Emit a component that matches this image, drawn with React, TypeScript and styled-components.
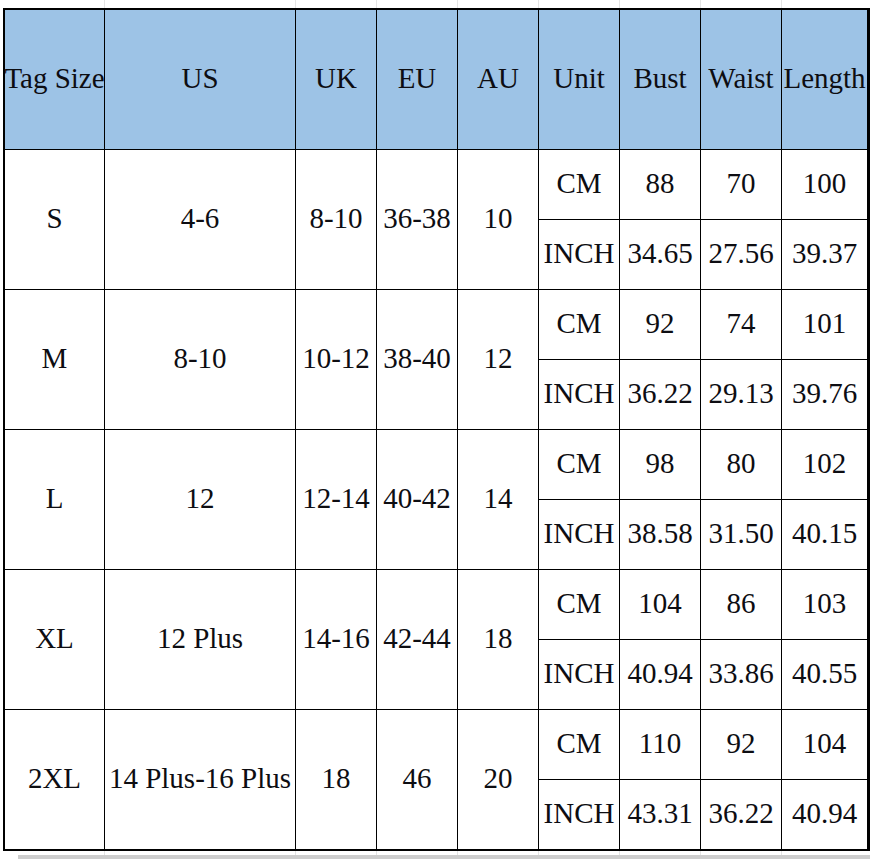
import React from 'react'
import styled, { createGlobalStyle } from 'styled-components'

type SizeRow = {
  tag: string
  us: string
  uk: string
  eu: string
  au: string
  cm: [string, string, string]
  inch: [string, string, string]
}

const headers = ['Tag Size', 'US', 'UK', 'EU', 'AU', 'Unit', 'Bust', 'Waist', 'Length']

const rows: SizeRow[] = [
  { tag: 'S', us: '4-6', uk: '8-10', eu: '36-38', au: '10', cm: ['88', '70', '100'], inch: ['34.65', '27.56', '39.37'] },
  { tag: 'M', us: '8-10', uk: '10-12', eu: '38-40', au: '12', cm: ['92', '74', '101'], inch: ['36.22', '29.13', '39.76'] },
  { tag: 'L', us: '12', uk: '12-14', eu: '40-42', au: '14', cm: ['98', '80', '102'], inch: ['38.58', '31.50', '40.15'] },
  { tag: 'XL', us: '12 Plus', uk: '14-16', eu: '42-44', au: '18', cm: ['104', '86', '103'], inch: ['40.94', '33.86', '40.55'] },
  { tag: '2XL', us: '14 Plus-16 Plus', uk: '18', eu: '46', au: '20', cm: ['110', '92', '104'], inch: ['43.31', '36.22', '40.94'] },
]

const COLUMNS = '99px 190px repeat(6, 80px) 85px'

const GlobalStyle = createGlobalStyle`
  html, body {
    margin: 0;
    padding: 0;
    background: #ffffff;
  }
  body {
    font-family: "Liberation Serif", "DejaVu Serif", serif;
    color: #0d0d12;
  }
`

export default function App() {
  return (
    <>
      <GlobalStyle />
      <Div_Sheet>
        <Div_GridStrip $height={8}>
          {headers.map((h) => (
            <Div_StripCell key={h} />
          ))}
        </Div_GridStrip>
        <Div_Table>
          {headers.map((h) => (
            <Div_Cell key={h} $header>
              {h}
            </Div_Cell>
          ))}
          {rows.map((r) => (
            <React.Fragment key={r.tag}>
              <Div_Cell $span>{r.tag}</Div_Cell>
              <Div_Cell $span>{r.us}</Div_Cell>
              <Div_Cell $span>{r.uk}</Div_Cell>
              <Div_Cell $span>{r.eu}</Div_Cell>
              <Div_Cell $span>{r.au}</Div_Cell>
              <Div_Cell>CM</Div_Cell>
              {r.cm.map((v, i) => (
                <Div_Cell key={'cm' + i}>{v}</Div_Cell>
              ))}
              <Div_Cell>INCH</Div_Cell>
              {r.inch.map((v, i) => (
                <Div_Cell key={'in' + i}>{v}</Div_Cell>
              ))}
            </React.Fragment>
          ))}
        </Div_Table>
        <Div_GridStrip $height={5}>
          {headers.map((h) => (
            <Div_StripCell key={h} />
          ))}
        </Div_GridStrip>
        <Div_Scrollbar />
      </Div_Sheet>
    </>
  )
}

const Div_Sheet = styled.div`
  padding-left: 3px;
  width: 869px;
  height: 859px;
  overflow: hidden;
  display: flex;
  flex-direction: column;
`

const Div_GridStrip = styled.div<{ $height: number }>`
  display: grid;
  grid-template-columns: ${COLUMNS};
  column-gap: 1px;
  height: ${(p) => p.$height}px;
  margin-left: 2px;
  width: fit-content;
  background: #e4e4e4;
`

const Div_StripCell = styled.div`
  background: #ffffff;
`

const Div_Table = styled.div`
  display: grid;
  grid-template-columns: ${COLUMNS};
  grid-template-rows: 139px repeat(10, 69px);
  gap: 1px;
  width: fit-content;
  background: #000000;
  border: 2px solid #000000;
  border-right-width: 3px;
`

const Div_Cell = styled.div<{ $header?: boolean; $span?: boolean }>`
  display: flex;
  align-items: center;
  justify-content: center;
  white-space: nowrap;
  font-size: 29px;
  line-height: 1;
  background: ${(p) => (p.$header ? '#9dc3e6' : '#ffffff')};
  grid-row: ${(p) => (p.$span ? 'span 2' : 'auto')};
  padding-bottom: 2px;
`

const Div_Scrollbar = styled.div`
  margin-left: 15px;
  height: 4px;
  width: 852px;
  background: #cdcdcd;
`
